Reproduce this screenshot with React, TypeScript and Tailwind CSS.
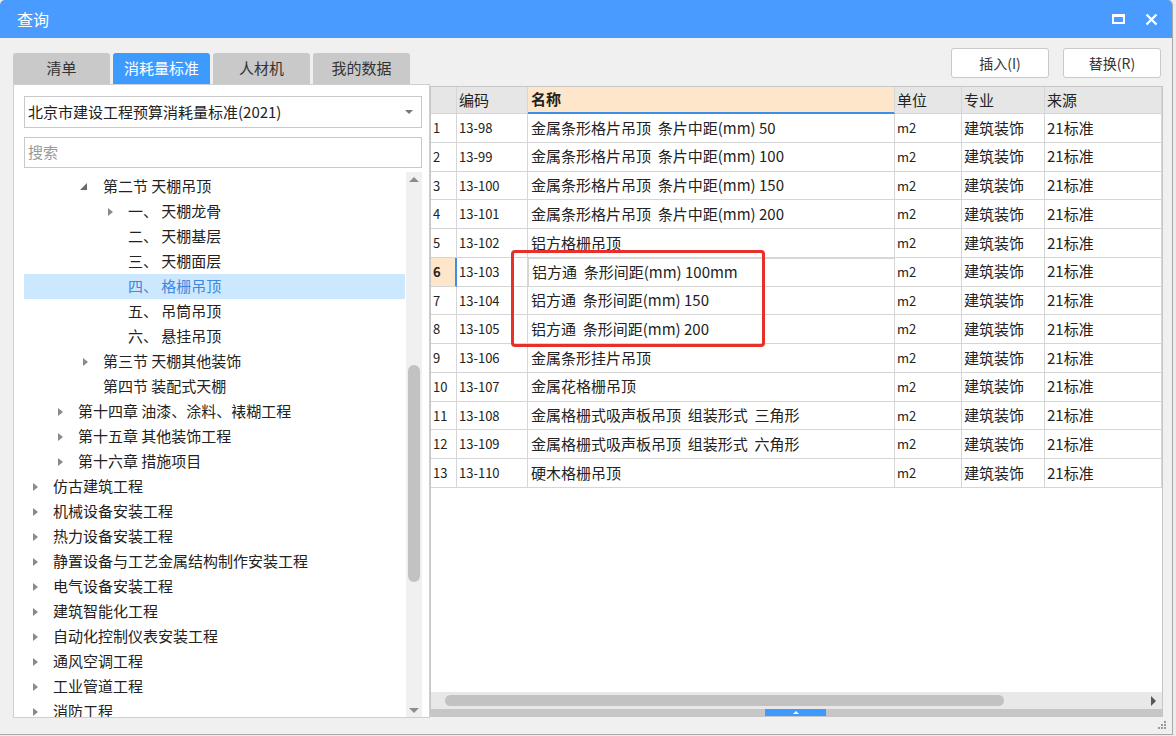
const tree: { label: string; level: number; arrow?: "open" | "closed"; selected?: boolean }[] = [
  { label: "第二节 天棚吊顶", level: 2, arrow: "open" },
  { label: "一、 天棚龙骨", level: 3, arrow: "closed" },
  { label: "二、 天棚基层", level: 3 },
  { label: "三、 天棚面层", level: 3 },
  { label: "四、 格栅吊顶", level: 3, selected: true },
  { label: "五、 吊筒吊顶", level: 3 },
  { label: "六、 悬挂吊顶", level: 3 },
  { label: "第三节 天棚其他装饰", level: 2, arrow: "closed" },
  { label: "第四节 装配式天棚", level: 2 },
  { label: "第十四章 油漆、涂料、裱糊工程", level: 1, arrow: "closed" },
  { label: "第十五章 其他装饰工程", level: 1, arrow: "closed" },
  { label: "第十六章 措施项目", level: 1, arrow: "closed" },
  { label: "仿古建筑工程", level: 0, arrow: "closed" },
  { label: "机械设备安装工程", level: 0, arrow: "closed" },
  { label: "热力设备安装工程", level: 0, arrow: "closed" },
  { label: "静置设备与工艺金属结构制作安装工程", level: 0, arrow: "closed" },
  { label: "电气设备安装工程", level: 0, arrow: "closed" },
  { label: "建筑智能化工程", level: 0, arrow: "closed" },
  { label: "自动化控制仪表安装工程", level: 0, arrow: "closed" },
  { label: "通风空调工程", level: 0, arrow: "closed" },
  { label: "工业管道工程", level: 0, arrow: "closed" },
  { label: "消防工程", level: 0, arrow: "closed" },
];

const rows: [string, string][] = [
  ["13-98", "金属条形格片吊顶  条片中距(mm) 50"],
  ["13-99", "金属条形格片吊顶  条片中距(mm) 100"],
  ["13-100", "金属条形格片吊顶  条片中距(mm) 150"],
  ["13-101", "金属条形格片吊顶  条片中距(mm) 200"],
  ["13-102", "铝方格栅吊顶"],
  ["13-103", "铝方通  条形间距(mm) 100mm"],
  ["13-104", "铝方通  条形间距(mm) 150"],
  ["13-105", "铝方通  条形间距(mm) 200"],
  ["13-106", "金属条形挂片吊顶"],
  ["13-107", "金属花格栅吊顶"],
  ["13-108", "金属格栅式吸声板吊顶  组装形式  三角形"],
  ["13-109", "金属格栅式吸声板吊顶  组装形式  六角形"],
  ["13-110", "硬木格栅吊顶"],
];

const cols = "grid grid-cols-[26px_71px_367px_67px_83px_117px]";
const cell = "border-r border-b border-[#d6d6d6] flex items-center overflow-hidden whitespace-pre";

function Tab({ label, active }: { label: string; active?: boolean }) {
  return (
    <div
      className={
        "w-[97px] h-[31px] rounded-t-[3px] flex items-center justify-center text-[15px] " +
        (active ? "bg-[#3d9bff] text-white" : "bg-[#c9c9c9] text-[#333]")
      }
    >
      {label}
    </div>
  );
}

export default function App() {
  return (
    <div className="w-[1176px] h-[736px] bg-[#ececec] overflow-hidden font-['Noto_Sans_CJK_SC','Noto_Sans',sans-serif] text-[#222]">
      <div className="w-[1173px] h-[735px] bg-[#f0f0f0] border-r border-b border-[#a9a9a9] flex flex-col rounded-t-[5px] overflow-hidden">
        {/* Title bar */}
        <div className="h-[38px] bg-[#4a9bff] flex items-center justify-between pl-[17px] pr-[14px] shrink-0">
          <span className="text-white text-[16px] leading-none">查询</span>
          <div className="flex items-center gap-[20px]">
            <div className="w-[13px] h-[10px] border-2 border-t-[3px] border-white" />
            <svg width="13" height="13" viewBox="0 0 13 13">
              <path d="M1.5 1.5 L11.5 11.5 M11.5 1.5 L1.5 11.5" stroke="#fff" strokeWidth="2.4" />
            </svg>
          </div>
        </div>

        {/* Body */}
        <div className="flex items-start">
          {/* Left column */}
          <div className="ml-[13px] mt-[15px] w-[417px] flex flex-col">
            <div className="flex gap-[3px]">
              <Tab label="清单" />
              <Tab label="消耗量标准" active />
              <Tab label="人材机" />
              <Tab label="我的数据" />
            </div>
            <div className="h-[634px] bg-white border border-[#cfcfcf] pl-[10px] pr-[7px] pt-[11px] flex flex-col">
              <div className="h-[32px] border border-[#c9c9c9] flex items-center justify-between pl-[3px] pr-[8px] text-[15px]">
                <span>北京市建设工程预算消耗量标准(2021)</span>
                <div className="w-0 h-0 border-l-[4px] border-r-[4px] border-t-[4px] border-l-transparent border-r-transparent border-t-[#777]" />
              </div>
              <div className="mt-[9px] h-[31px] border border-[#c9c9c9] flex items-center pl-[3px] text-[15px] text-[#9a9a9a]">
                搜索
              </div>
              <div className="mt-[4px] flex-1 flex overflow-hidden">
                <div className="flex-1 pt-[2px] overflow-hidden">
                  {tree.map((t) => (
                    <div
                      key={t.label}
                      className={
                        "h-[25px] flex items-center text-[15px] whitespace-nowrap " +
                        (t.selected ? "bg-[#cce8ff] text-[#3f86de]" : "")
                      }
                      style={{ paddingLeft: t.level * 25 }}
                    >
                      <div className="w-[29px] h-full flex items-center pl-[9px]">
                        {t.arrow === "closed" && (
                          <div className="w-0 h-0 border-t-[4px] border-b-[4px] border-l-[5px] border-t-transparent border-b-transparent border-l-[#8a8a8a]" />
                        )}
                        {t.arrow === "open" && (
                          <div className="w-0 h-0 ml-[-3px] border-b-[7px] border-l-[7px] border-l-transparent border-b-[#6b6b6b]" />
                        )}
                      </div>
                      <span>{t.label}</span>
                    </div>
                  ))}
                </div>
                {/* Tree scrollbar */}
                <div className="w-[16px] ml-[1px] bg-[#f0f0f0] flex flex-col items-center">
                  <div className="mt-[5px] w-0 h-0 border-l-[5px] border-r-[5px] border-b-[5px] border-l-transparent border-r-transparent border-b-[#8d8d8d]" />
                  <div className="mt-[183px] w-[12px] h-[217px] rounded-full bg-[#c2c2c2]" />
                  <div className="flex-1" />
                  <div className="mb-[4px] w-0 h-0 border-l-[5px] border-r-[5px] border-t-[5px] border-l-transparent border-r-transparent border-t-[#8d8d8d]" />
                </div>
              </div>
            </div>
          </div>

          {/* Right column */}
          <div className="mt-[10px] w-[733px] flex flex-col">
            <div className="h-[30px] flex justify-end gap-[14px] pr-[2px]">
              <button className="w-[98px] h-[30px] bg-white border border-[#c9c9c9] rounded-[3px] text-[14px] text-[#333]">
                插入(I)
              </button>
              <button className="w-[98px] h-[30px] bg-white border border-[#c9c9c9] rounded-[3px] text-[14px] text-[#333]">
                替换(R)
              </button>
            </div>
            <div className="mt-[8px] h-[631px] bg-white border border-[#c6c6c6] flex flex-col relative">
              {/* Header */}
              <div className={cols + " h-[27px] text-[15px]"}>
                <div className={cell + " bg-[#e6e6e6]"} />
                <div className={cell + " bg-[#e6e6e6] pl-[2px]"}>编码</div>
                <div className={cell + " bg-[#fde6c9] pl-[3px] font-bold border-b-2 border-b-[#3c8fe6]"}>名称</div>
                <div className={cell + " bg-[#e6e6e6] pl-[2px]"}>单位</div>
                <div className={cell + " bg-[#e6e6e6] pl-[2px]"}>专业</div>
                <div className={cell + " bg-[#e6e6e6] pl-[2px]"}>来源</div>
              </div>
              {rows.map(([code, name], i) => {
                const sel = i === 5;
                return (
                  <div key={code} className={cols + " h-[28.75px]"}>
                    <div
                      className={
                        cell +
                        " pl-[2px] text-[13px] " +
                        (sel ? "bg-[#fde6c9] font-bold border-r-2 border-r-[#3c8fe6]" : "")
                      }
                    >
                      {i + 1}
                    </div>
                    <div className={cell + " pl-[2px] text-[13px]"}>{code}</div>
                    <div className={cell + " pl-[3px] text-[15px] " + (sel ? "border border-[#3c8fe6]" : "")}>
                      {name}
                    </div>
                    <div className={cell + " pl-[2px] text-[13px]"}>m2</div>
                    <div className={cell + " pl-[2px] text-[15px]"}>建筑装饰</div>
                    <div className={cell + " pl-[2px] text-[15px]"}>21标准</div>
                  </div>
                );
              })}
              <div className="flex-1" />
              {/* Horizontal scrollbar */}
              <div className="h-[17px] bg-[#e8e8e8] flex items-center pl-[14px] pr-[6px]">
                <div className="w-[559px] h-[11px] rounded-full bg-[#c2c2c2]" />
                <div className="flex-1" />
                <div className="w-0 h-0 border-t-[5px] border-b-[5px] border-l-[5px] border-t-transparent border-b-transparent border-l-[#555]" />
              </div>
              <div className="h-[7px] bg-[#c6c6c6] pl-[334px] flex">
                <div className="w-[61px] h-full bg-[#3d9bff] flex items-center justify-center">
                  <div className="w-0 h-0 border-l-[3px] border-r-[3px] border-b-[3px] border-l-transparent border-r-transparent border-b-white" />
                </div>
              </div>
              {/* Red highlight box */}
              <div className="absolute left-[80px] top-[163px] w-[254px] h-[97px] border-[3px] border-[#e8302a] rounded-[4px] pointer-events-none" />
            </div>
          </div>
        </div>
        <div className="flex-1 flex justify-end items-end pr-[6px] pb-[5px]">
          <svg width="8" height="8" viewBox="0 0 8 8">
            <rect x="6" y="0" width="2" height="2" fill="#999" />
            <rect x="3" y="3" width="2" height="2" fill="#999" />
            <rect x="6" y="3" width="2" height="2" fill="#999" />
            <rect x="0" y="6" width="2" height="2" fill="#999" />
            <rect x="3" y="6" width="2" height="2" fill="#999" />
            <rect x="6" y="6" width="2" height="2" fill="#999" />
          </svg>
        </div>
      </div>
    </div>
  );
}
